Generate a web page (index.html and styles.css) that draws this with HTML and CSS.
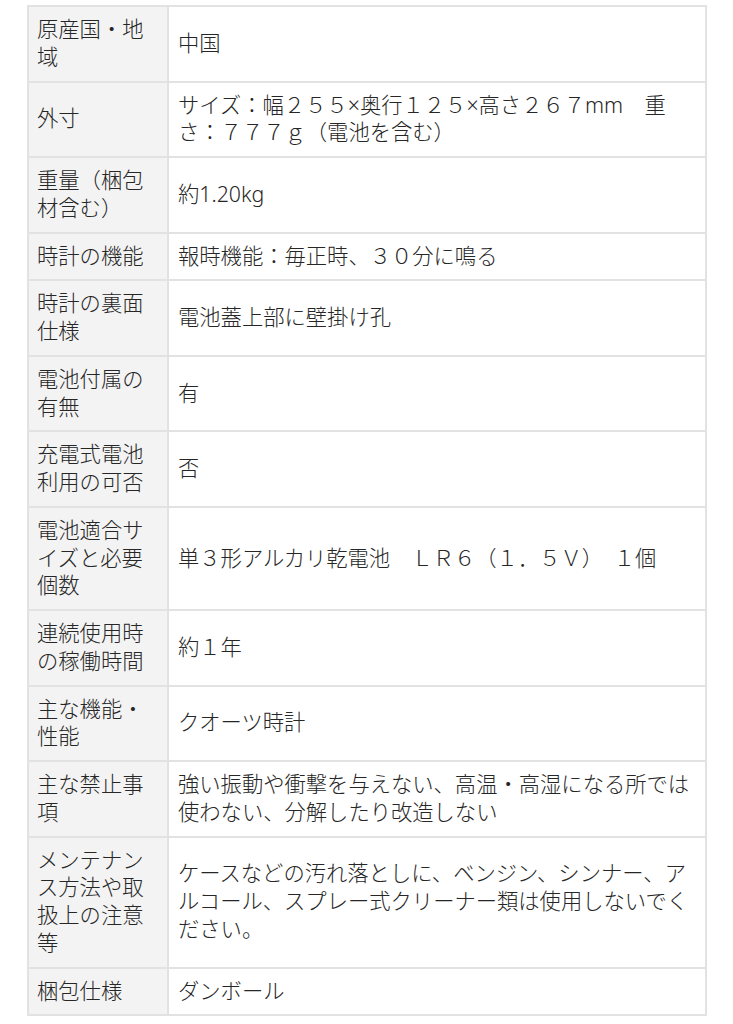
FILE: index.html
```html
<!DOCTYPE html>
<html lang="ja">
<head>
<meta charset="utf-8">
<link rel="stylesheet" href="styles.css">
</head>
<body>
<table class="spec">
<tbody>
<tr><th>原産国・地域</th><td>中国</td></tr>
<tr><th>外寸</th><td>サイズ：幅２５５×奥行１２５×高さ２６７mm　重さ：７７７ｇ（電池を含む）</td></tr>
<tr><th>重量（梱包材含む）</th><td>約1.20kg</td></tr>
<tr><th>時計の機能</th><td>報時機能：毎正時、３０分に鳴る</td></tr>
<tr><th>時計の裏面仕様</th><td>電池蓋上部に壁掛け孔</td></tr>
<tr><th>電池付属の有無</th><td>有</td></tr>
<tr><th>充電式電池利用の可否</th><td>否</td></tr>
<tr><th>電池適合サイズと必要個数</th><td>単３形アルカリ乾電池　ＬＲ６（１．５Ｖ）　１個</td></tr>
<tr><th>連続使用時の稼働時間</th><td>約１年</td></tr>
<tr><th>主な機能・性能</th><td>クオーツ時計</td></tr>
<tr><th>主な禁止事項</th><td>強い振動や衝撃を与えない、高温・高湿になる所では使わない、分解したり改造しない</td></tr>
<tr><th>メンテナンス方法や取扱上の注意等</th><td>ケースなどの汚れ落としに、ベンジン、シンナー、アルコール、スプレー式クリーナー類は使用しないでください。</td></tr>
<tr><th>梱包仕様</th><td>ダンボール</td></tr>
</tbody>
</table>
</body>
</html>
```

FILE: styles.css
```css
html, body {
  background: #ffffff;
}
body {
  margin: 5px 0 0 27px;
  font-family: "Noto Sans", "Noto Sans CJK JP", sans-serif;
  color: #262626;
}
.spec {
  width: 680px;
  border-collapse: collapse;
  table-layout: fixed;
  font-size: 21.3px;
  line-height: 27.75px;
  font-weight: 300;
}
.spec th,
.spec td {
  border: 2px solid #e2e2e2;
  padding: 8px 10px 10px;
  vertical-align: middle;
  text-align: left;
  font-weight: 300;
}
.spec th {
  width: 120px;
  padding-left: 8px;
  padding-right: 10px;
  background: #f3f3f3;
}
.spec td {
  background: #ffffff;
  padding-left: 9px;
  padding-right: 8px;
}
```
